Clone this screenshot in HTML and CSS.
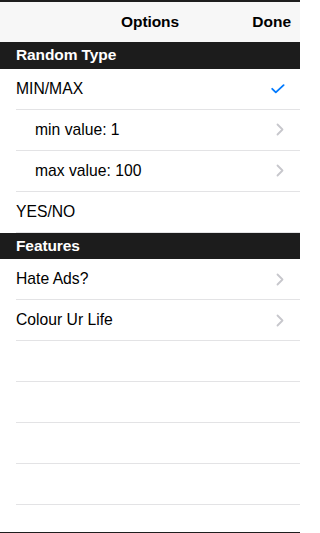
FILE: index.html
```html
<!DOCTYPE html>
<html>
<head>
<meta charset="utf-8">
<link rel="stylesheet" href="styles.css">
</head>
<body>
<div class="screen">
  <header class="nav">
    <span class="nav-title">Options</span>
    <span class="nav-done">Done</span>
  </header>
  <div class="list">
    <div class="section-header">Random Type</div>
    <div class="row">
      <span class="label">MIN/MAX</span>
      <svg class="check" width="14" height="10" viewBox="0 0 14 10"><path d="M1.2 4.8 L4.8 8.4 L12.6 1.2" fill="none" stroke="#007aff" stroke-width="1.8" stroke-linecap="round" stroke-linejoin="round"/></svg>
    </div>
    <div class="row indent">
      <span class="label">min value: 1</span>
      <svg class="chev" width="8" height="13" viewBox="0 0 8 13"><path d="M1.5 1.5 L6.5 6.5 L1.5 11.5" fill="none" stroke="#c7c7cc" stroke-width="1.8" stroke-linecap="round" stroke-linejoin="round"/></svg>
    </div>
    <div class="row indent">
      <span class="label">max value: 100</span>
      <svg class="chev" width="8" height="13" viewBox="0 0 8 13"><path d="M1.5 1.5 L6.5 6.5 L1.5 11.5" fill="none" stroke="#c7c7cc" stroke-width="1.8" stroke-linecap="round" stroke-linejoin="round"/></svg>
    </div>
    <div class="row">
      <span class="label">YES/NO</span>
    </div>
    <div class="section-header">Features</div>
    <div class="row">
      <span class="label">Hate Ads?</span>
      <svg class="chev" width="8" height="13" viewBox="0 0 8 13"><path d="M1.5 1.5 L6.5 6.5 L1.5 11.5" fill="none" stroke="#c7c7cc" stroke-width="1.8" stroke-linecap="round" stroke-linejoin="round"/></svg>
    </div>
    <div class="row">
      <span class="label">Colour Ur Life</span>
      <svg class="chev" width="8" height="13" viewBox="0 0 8 13"><path d="M1.5 1.5 L6.5 6.5 L1.5 11.5" fill="none" stroke="#c7c7cc" stroke-width="1.8" stroke-linecap="round" stroke-linejoin="round"/></svg>
    </div>
    <div class="row empty"></div>
    <div class="row empty"></div>
    <div class="row empty"></div>
    <div class="row empty"></div>
  </div>
</div>
</body>
</html>
```
FILE: styles.css
```css
html, body {
  margin: 0;
  padding: 0;
  background: #ffffff;
}
body {
  font-family: "Liberation Sans", Arial, sans-serif;
  color: #000;
}
.screen {
  width: 300px;
  height: 533px;
  box-sizing: border-box;
  display: flex;
  flex-direction: column;
  border-top: 2px solid #1e1e1e;
  border-bottom: 1.5px solid #1e1e1e;
  overflow: hidden;
}
.nav {
  height: 40px;
  flex: none;
  background: #f7f7f7;
  position: relative;
  display: flex;
  align-items: center;
  justify-content: center;
  font-size: 15.5px;
  font-weight: bold;
}
.nav-title {
  letter-spacing: -0.1px;
}
.nav-done {
  position: absolute;
  right: 9px;
  top: 0;
  line-height: 40px;
}
.list {
  flex: 1;
  display: flex;
  flex-direction: column;
}
.section-header {
  height: 26.5px;
  flex: none;
  background: #1c1c1c;
  color: #ffffff;
  font-size: 15.5px;
  font-weight: bold;
  letter-spacing: -0.1px;
  padding-left: 16px;
  display: flex;
  align-items: center;
  box-sizing: border-box;
}
.row {
  height: 41px;
  flex: none;
  box-sizing: border-box;
  margin-left: 16px;
  padding-right: 16px;
  border-bottom: 1px solid #e3e3e5;
  display: flex;
  align-items: center;
  justify-content: space-between;
  font-size: 15.7px;
}
.row.indent .label {
  padding-left: 19px;
}
.check {
  display: block;
  margin-right: -1px;
}
.chev {
  display: block;
}
```
